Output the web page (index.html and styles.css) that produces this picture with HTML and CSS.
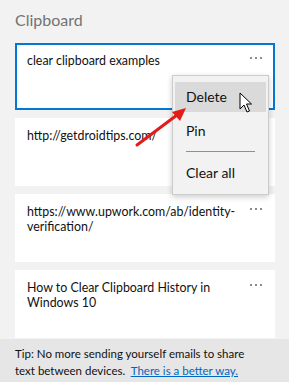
FILE: index.html
```html
<!DOCTYPE html>
<html lang="en">
<head>
    <meta charset="UTF-8">
    <meta name="viewport" content="width=device-width, initial-scale=1.0">
    <title>Clipboard</title>
    <link rel="stylesheet" href="styles.css">
</head>
<body>
    <div class="panel">
        <h1 class="panel-title">Clipboard</h1>

        <div class="clip-list">
            <div class="clip is-selected">
                <span class="clip-text">clear clipboard examples</span>
                <svg class="clip-more" width="12" height="2" viewBox="0 0 12 2"><rect x="0" width="2" height="2"/><rect x="5" width="2" height="2"/><rect x="10" width="2" height="2"/></svg>
            </div>
            <div class="clip">
                <span class="clip-text">http://getdroidtips.com/</span>
                <svg class="clip-more" width="12" height="2" viewBox="0 0 12 2"><rect x="0" width="2" height="2"/><rect x="5" width="2" height="2"/><rect x="10" width="2" height="2"/></svg>
            </div>
            <div class="clip">
                <span class="clip-text">https://www.upwork.com/ab/identity-<br>verification/</span>
                <svg class="clip-more" width="12" height="2" viewBox="0 0 12 2"><rect x="0" width="2" height="2"/><rect x="5" width="2" height="2"/><rect x="10" width="2" height="2"/></svg>
            </div>
            <div class="clip">
                <span class="clip-text">How to Clear Clipboard History in<br>Windows 10</span>
                <svg class="clip-more" width="12" height="2" viewBox="0 0 12 2"><rect x="0" width="2" height="2"/><rect x="5" width="2" height="2"/><rect x="10" width="2" height="2"/></svg>
            </div>
        </div>

        <div class="tip-bar">
            Tip: No more sending yourself emails to share<br>
            text between devices. &nbsp;<a href="#" class="tip-link">There is a better way.</a>
        </div>
    </div>

    <!-- menu opened from the first item -->
    <div class="context-menu">
        <div class="menu-item is-hover">Delete</div>
        <div class="menu-item menu-item-pin">Pin</div>
        <div class="menu-sep"></div>
        <div class="menu-item">Clear all</div>
    </div>

    <svg class="mouse-cursor" width="14" height="22" viewBox="0 0 14 22">
        <path d="M1 1 L1 17 L5 13 L8 20 L10.5 19 L7.5 12 L12.5 12 Z" fill="#fff" stroke="#000" stroke-width="1" stroke-linejoin="miter"/>
    </svg>

    <svg class="red-arrow" width="60" height="50" viewBox="0 0 60 50">
        <line x1="7" y1="45" x2="47" y2="15" stroke="#e31b1b" stroke-width="3" stroke-linecap="round"/>
        <polygon points="56,8 42,12 50,21" fill="#e31b1b"/>
    </svg>
</body>
</html>
```

FILE: styles.css
```css
body {
    margin: 0;
    font-family: "Segoe UI", Lato, "Noto Sans", sans-serif;
    background-color: #f2f2f2;
    color: #111;
    overflow: hidden;
}

.panel {
    display: flex;
    flex-direction: column;
    height: 100vh;
}

.panel-title {
    margin: 0;
    padding: 10px 15px 0;
    height: 43px;
    box-sizing: border-box;
    font-size: 16px;
    font-weight: 400;
    color: #737373;
}

.clip-list {
    flex: 1;
    overflow: hidden;
    display: flex;
    flex-direction: column;
    gap: 8px;
    padding: 0 14px 0 15px;
}

.clip {
    flex: none;
    display: flex;
    justify-content: space-between;
    align-items: flex-start;
    height: 68px;
    padding: 10px 13px 0 12px;
    box-sizing: border-box;
    background-color: #ffffff;
    font-size: 12.4px;
    line-height: 15px;
}

.clip.is-selected {
    height: 67px;
    border: 2px solid #0078d7;
    padding: 8px 11px 0 10px;
}

.clip-more {
    flex: none;
    margin-top: 4px;
    fill: #8c8c8c;
}

.tip-bar {
    flex: none;
    height: 43px;
    box-sizing: border-box;
    padding: 6px 15px 0;
    background-color: #e6e6e6;
    font-size: 11.5px;
    line-height: 17px;
    white-space: nowrap;
}

.tip-link {
    color: #0067c0;
}

.context-menu {
    position: absolute;
    left: 172px;
    top: 75px;
    width: 97px;
    box-sizing: border-box;
    padding: 6px 2px;
    background-color: #f2f2f2;
    border: 1px solid #cccccc;
    box-shadow: 0 2px 6px rgba(0, 0, 0, 0.2);
}

.menu-item {
    height: 30px;
    line-height: 30px;
    padding-left: 11px;
    font-size: 14px;
}

.menu-item.is-hover {
    background-color: #dadada;
}

.menu-item-pin {
    margin-top: 4px;
}

.menu-sep {
    height: 1px;
    margin: 5px 11px 6px;
    background-color: #8f8f8f;
}

.mouse-cursor {
    position: absolute;
    left: 239px;
    top: 92px;
}

.red-arrow {
    position: absolute;
    left: 130px;
    top: 100px;
}
```
